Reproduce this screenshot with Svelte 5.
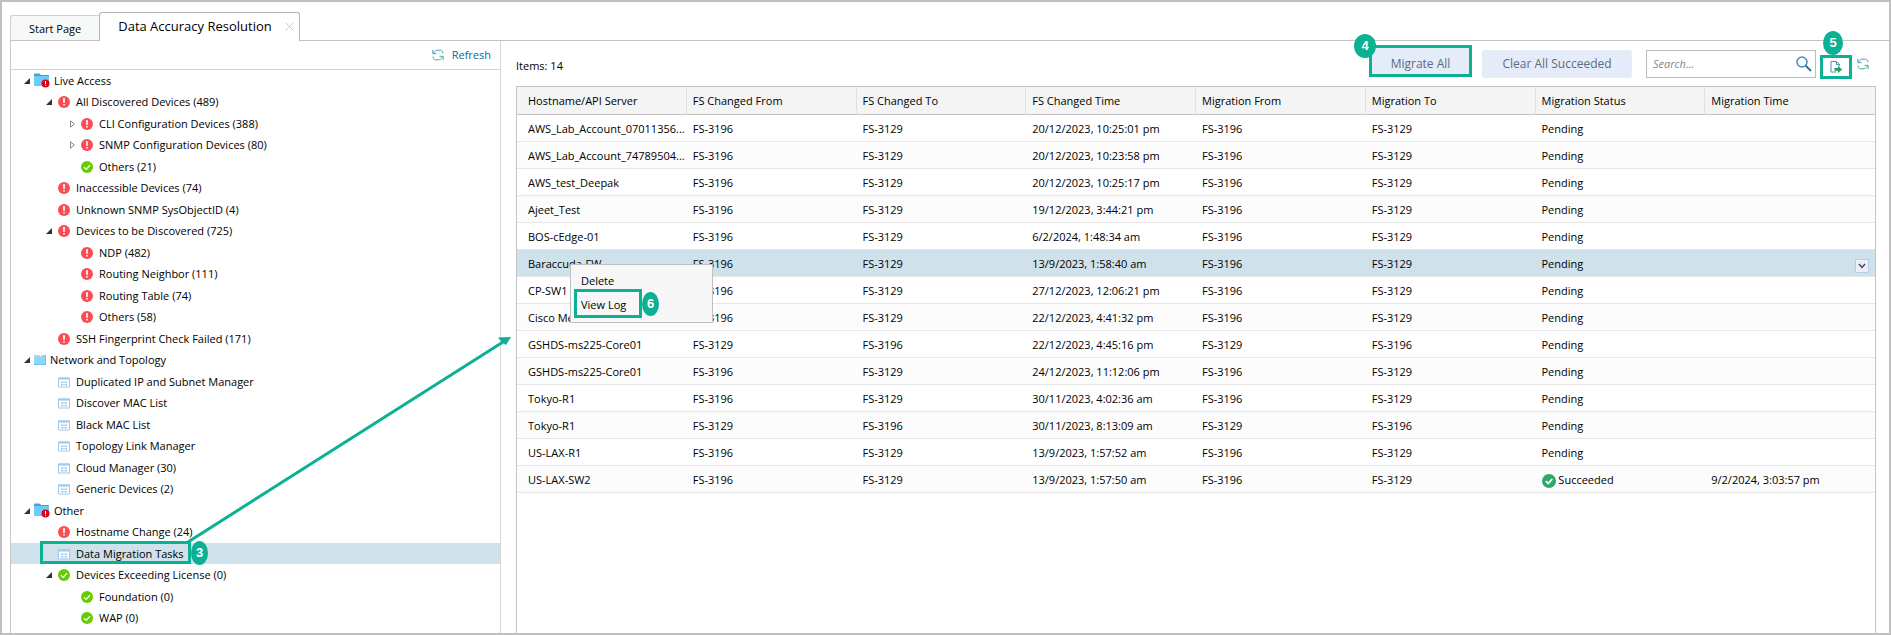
<script lang="ts">
	type Icon = 'alert' | 'ok' | 'page' | 'folder' | 'folder-alert';
	type Toggle = 'open' | 'closed';
	type TreeNode = { label: string; level: number; icon: Icon; toggle?: Toggle };

	const nodes: TreeNode[] = [
		{ label: 'Live Access', level: 0, icon: 'folder-alert', toggle: 'open' },
		{ label: 'All Discovered Devices (489)', level: 1, icon: 'alert', toggle: 'open' },
		{ label: 'CLI Configuration Devices (388)', level: 2, icon: 'alert', toggle: 'closed' },
		{ label: 'SNMP Configuration Devices (80)', level: 2, icon: 'alert', toggle: 'closed' },
		{ label: 'Others (21)', level: 2, icon: 'ok' },
		{ label: 'Inaccessible Devices (74)', level: 1, icon: 'alert' },
		{ label: 'Unknown SNMP SysObjectID (4)', level: 1, icon: 'alert' },
		{ label: 'Devices to be Discovered (725)', level: 1, icon: 'alert', toggle: 'open' },
		{ label: 'NDP (482)', level: 2, icon: 'alert' },
		{ label: 'Routing Neighbor (111)', level: 2, icon: 'alert' },
		{ label: 'Routing Table (74)', level: 2, icon: 'alert' },
		{ label: 'Others (58)', level: 2, icon: 'alert' },
		{ label: 'SSH Fingerprint Check Failed (171)', level: 1, icon: 'alert' },
		{ label: 'Network and Topology', level: 0, icon: 'folder', toggle: 'open' },
		{ label: 'Duplicated IP and Subnet Manager', level: 1, icon: 'page' },
		{ label: 'Discover MAC List', level: 1, icon: 'page' },
		{ label: 'Black MAC List', level: 1, icon: 'page' },
		{ label: 'Topology Link Manager', level: 1, icon: 'page' },
		{ label: 'Cloud Manager (30)', level: 1, icon: 'page' },
		{ label: 'Generic Devices (2)', level: 1, icon: 'page' },
		{ label: 'Other', level: 0, icon: 'folder-alert', toggle: 'open' },
		{ label: 'Hostname Change (24)', level: 1, icon: 'alert' },
		{ label: 'Data Migration Tasks', level: 1, icon: 'page' },
		{ label: 'Devices Exceeding License (0)', level: 1, icon: 'ok', toggle: 'open' },
		{ label: 'Foundation (0)', level: 2, icon: 'ok' },
		{ label: 'WAP (0)', level: 2, icon: 'ok' }
	];

	const columns = [
		'Hostname/API Server',
		'FS Changed From',
		'FS Changed To',
		'FS Changed Time',
		'Migration From',
		'Migration To',
		'Migration Status',
		'Migration Time'
	];

	const A = 'FS-3196';
	const B = 'FS-3129';

	const rows = [
		['AWS_Lab_Account_07011356...', A, B, '20/12/2023, 10:25:01 pm', A, B, 'Pending', ''],
		['AWS_Lab_Account_74789504...', A, B, '20/12/2023, 10:23:58 pm', A, B, 'Pending', ''],
		['AWS_test_Deepak', A, B, '20/12/2023, 10:25:17 pm', A, B, 'Pending', ''],
		['Ajeet_Test', A, B, '19/12/2023, 3:44:21 pm', A, B, 'Pending', ''],
		['BOS-cEdge-01', A, B, '6/2/2024, 1:48:34 am', A, B, 'Pending', ''],
		['Baraccuda-FW', A, B, '13/9/2023, 1:58:40 am', A, B, 'Pending', ''],
		['CP-SW1', A, B, '27/12/2023, 12:06:21 pm', A, B, 'Pending', ''],
		['Cisco Meraki', A, B, '22/12/2023, 4:41:32 pm', A, B, 'Pending', ''],
		['GSHDS-ms225-Core01', B, A, '22/12/2023, 4:45:16 pm', B, A, 'Pending', ''],
		['GSHDS-ms225-Core01', A, B, '24/12/2023, 11:12:06 pm', A, B, 'Pending', ''],
		['Tokyo-R1', A, B, '30/11/2023, 4:02:36 am', A, B, 'Pending', ''],
		['Tokyo-R1', B, A, '30/11/2023, 8:13:09 am', B, A, 'Pending', ''],
		['US-LAX-R1', A, B, '13/9/2023, 1:57:52 am', A, B, 'Pending', ''],
		['US-LAX-SW2', A, B, '13/9/2023, 1:57:50 am', A, B, 'Succeeded', '9/2/2024, 3:03:57 pm']
	];

	let selectedNode = $state(22);
	let selectedRow = $state(5);
	let search = $state('');
</script>

{#snippet refreshIcon()}
	<svg class="icon" viewBox="0 0 12 12" aria-hidden="true">
		<path d="M.8 1v3.700h3.700M1.500 4C2.500 2 4.200 1.200 6 1.200h2.500c1.500 0 2.500 1.300 2.500 3.300" fill="none" stroke="#4a9cc0" />
		<path d="M11.200 11V7.300H7.500M10.500 8C9.500 10 7.800 10.800 6 10.800H3.500C2 10.800 1 9.500 1 7.500" fill="none" stroke="#3cb587" />
	</svg>
{/snippet}

{#snippet nodeIcon(icon: Icon)}
	{#if icon === 'alert'}
		<svg class="icon" viewBox="0 0 12 12" aria-hidden="true">
			<circle cx="6" cy="6" r="6" fill="#fb4b53" />
			<path d="M5 2.300h2L6.700 7H5.300zM5.200 8h1.600v1.600H5.200z" fill="#fff" />
		</svg>
	{:else if icon === 'ok'}
		<svg class="icon" viewBox="0 0 12 12" aria-hidden="true">
			<circle cx="6" cy="6" r="6" fill="#6c0" />
			<path d="M3 6.200l2.200 2.200L9 4.200" fill="none" stroke="#fff" stroke-width="1.300" />
		</svg>
	{:else if icon === 'page'}
		<svg class="icon" viewBox="0 0 12 12" aria-hidden="true">
			<path d="M.5 2h11v9H.5z" fill="#fff" stroke="#9dcbf0" />
			<path d="M0 1.500h12v2H0z" fill="#9dcbf0" />
			<path d="M3 5.500h2.500v1.500H3zM6.500 5.500H9v1.500H6.500zM3 8h2.500v1.500H3zM6.500 8H9v1.500H6.500z" fill="#9dcbf0" />
		</svg>
	{:else if icon === 'folder'}
		<svg class="icon" viewBox="0 0 12 12" aria-hidden="true">
			<path d="M0 1h6v10H0z" fill="#c3d3dc" />
			<path d="M0 3h6l2-2h4v10H0z" fill="#8ed8fb" />
			<path d="M11 1h1v10H0v-1h11z" fill="#6fc3ee" />
		</svg>
	{:else}
		<svg class="folder" viewBox="0 0 16 15" aria-hidden="true">
			<path d="M0 1.500Q0 .5 1 .5h4.500L7 2h7q1 0 1 1v3H0z" fill="#4d9fc9" />
			<path d="M0 3h14q1 0 1 1v8q0 1-1 1H1q-1 0-1-1z" fill="#6ccbfa" />
			<circle cx="11.500" cy="10.500" r="4" fill="#d9041a" />
			<path d="M11 8h1v3h-1zM11 11.800h1v1h-1z" fill="#fff" />
		</svg>
	{/if}
{/snippet}

<div class="frame">
	<nav class="tabs">
		<a class="tab" href="#start">Start Page</a>
		<div class="tab active">
			<a href="#resolution">Data Accuracy Resolution</a>
			<button class="close" aria-label="Close tab">
				<svg viewBox="0 0 9 9" aria-hidden="true"><path d="M.5.5l8 8M8.500.5l-8 8" stroke="#ccc" /></svg>
			</button>
		</div>
	</nav>

	<div class="body">
		<aside class="sidebar">
			<div class="sidebar-head">
				<button class="refresh">{@render refreshIcon()} Refresh</button>
			</div>
			<ul class="tree">
				{#each nodes as node, i}
					<li class="node level-{node.level}" class:selected={i === selectedNode}>
						<button class="node-button" onclick={() => (selectedNode = i)}>
							<span class="toggle">
								{#if node.toggle === 'open'}
									<svg viewBox="0 0 6 6" aria-hidden="true"><path d="M6 0v6H0z" fill="#333" /></svg>
								{:else if node.toggle === 'closed'}
									<svg class="closed" viewBox="0 0 5 8" aria-hidden="true">
										<path d="M.5.8L4.300 4 .5 7.200z" fill="#fff" stroke="#888" />
									</svg>
								{/if}
							</span>
							{@render nodeIcon(node.icon)}
							<span>{node.label}</span>
						</button>
						{#if i === 22}
							<span class="outline"></span>
							<span class="step">3</span>
						{/if}
					</li>
				{/each}
			</ul>
			<svg class="arrow" viewBox="0 0 324 206" aria-hidden="true">
				<path d="M1 205L316 5" stroke="#0cb092" stroke-width="3" />
				<path d="M324 0l-5 8-4-2.500-4-5z" fill="#0cb092" />
			</svg>
		</aside>

		<main class="content">
			<div class="toolbar">
				<span class="count">Items: 14</span>
				<div class="marked migrate">
					<button class="action">Migrate All</button>
					<span class="step">4</span>
				</div>
				<button class="action clear">Clear All Succeeded</button>
				<label class="search">
					<input type="text" placeholder="Search..." aria-label="Search" bind:value={search} />
					<svg viewBox="0 0 16 16" aria-hidden="true">
						<circle cx="6" cy="6" r="5" fill="none" stroke="#3f8fc4" stroke-width="1.500" />
						<path d="M9.800 9.800L15 15" stroke="#2b78b0" stroke-width="2" />
					</svg>
				</label>
				<div class="marked export">
					<button aria-label="Export">
						<svg viewBox="0 0 12 12" aria-hidden="true">
							<path d="M6 11H1V.5h5.500L9.500 3.500V5M6.500.5v3h3" fill="none" stroke="#4a8fc4" />
							<path d="M4.500 7H8V4.800l4 3.600-4 3.600V9.800H4.500z" fill="#17a05e" />
						</svg>
					</button>
					<span class="step">5</span>
				</div>
				<button class="reload" aria-label="Reload">{@render refreshIcon()}</button>
			</div>

			<div class="grid">
				<table>
					<thead>
						<tr>
							{#each columns as column}
								<th>{column}</th>
							{/each}
						</tr>
					</thead>
					<tbody>
						{#each rows as row, i}
							<tr class:selected={i === selectedRow} onclick={() => (selectedRow = i)}>
								{#each row as cell, c}
									<td>
										{#if cell === 'Succeeded'}
											<svg class="done" viewBox="0 0 14 14" aria-hidden="true">
												<circle cx="7" cy="7" r="7" fill="#2fa968" />
												<path d="M3.800 7.200l2.300 2.300 4.200-4.500" fill="none" stroke="#fff" stroke-width="1.800" />
											</svg>
										{/if}
										{cell}
										{#if i === selectedRow && c === 7}
											<button class="row-menu" aria-label="Row actions">
												<svg viewBox="0 0 8 6" aria-hidden="true">
													<path d="M1 1l3 3.500L7 1" fill="none" stroke="#444" stroke-width="1.400" />
												</svg>
											</button>
										{/if}
									</td>
								{/each}
							</tr>
						{/each}
					</tbody>
				</table>

				<div class="menu">
					<button>Delete</button>
					<div class="marked">
						<button>View Log</button>
						<span class="step">6</span>
					</div>
				</div>
			</div>
		</main>
	</div>
</div>

<style>
	:global(body) {
		margin: 0;
		background: #fff;
	}

	.frame {
		box-sizing: border-box;
		min-height: 100vh;
		padding: 10px 0 0 8px;
		border: 2px solid #c0c0c0;
		display: flex;
		flex-direction: column;
		font: 11px/20px 'Open Sans', sans-serif;
		color: #000;
	}

	button,
	input {
		font: inherit;
		color: inherit;
		margin: 0;
		padding: 0;
		border: 0;
		background: none;
	}

	button {
		cursor: pointer;
	}

	svg {
		display: block;
		flex: none;
	}

	.icon {
		width: 12px;
		height: 12px;
	}

	.tabs {
		display: flex;
		align-items: flex-end;
		border-bottom: 1px solid #c3c3c3;
	}

	.tabs a {
		color: #000;
		text-decoration: none;
	}

	.tab {
		box-sizing: border-box;
		height: 25px;
		padding: 3px 18px;
		border: 1px solid #d0d0d0;
		border-bottom: 0;
		border-right: 0;
		border-radius: 3px 0 0 0;
		background: #f7f9f9;
	}

	.tab.active {
		display: flex;
		align-items: center;
		gap: 13px;
		height: 29px;
		margin-bottom: -1px;
		padding: 0 5px 2px 18px;
		border: 1px solid #b0b4b8;
		border-bottom: 0;
		border-radius: 3px 3px 0 0;
		background: #fff;
		font-size: 13px;
	}

	.close svg {
		width: 9px;
		height: 9px;
	}

	.body {
		flex: 1;
		display: flex;
	}

	.sidebar {
		position: relative;
		flex: none;
		width: 489px;
		border-left: 1px solid #c8c8c8;
		border-right: 1px solid #d8d8d8;
	}

	.sidebar-head {
		display: flex;
		justify-content: flex-end;
		padding: 4px 9px;
		border-bottom: 1px solid #d4d4d4;
	}

	.refresh {
		display: flex;
		align-items: center;
		gap: 8px;
		color: #10699b;
	}

	.tree {
		display: grid;
		grid-auto-rows: 21px 22px;
		margin: 0;
		padding: 0 0 4px;
		list-style: none;
	}

	.node {
		position: relative;
	}

	.node-button {
		display: flex;
		align-items: center;
		gap: 4px;
		width: 100%;
		height: 100%;
		padding-left: 13px;
		white-space: nowrap;
	}

	.level-1 .node-button {
		gap: 6px;
		padding-left: 35px;
	}

	.level-2 .node-button {
		gap: 6px;
		padding-left: 58px;
	}

	.folder {
		width: 16px;
		height: 15px;
	}

	.toggle {
		display: flex;
		justify-content: flex-end;
		width: 6px;
	}

	.toggle svg {
		width: 6px;
		height: 6px;
	}

	.toggle .closed {
		width: 5px;
		height: 8px;
	}

	.selected {
		background: #cfe1ea;
	}

	.step {
		position: absolute;
		z-index: 2;
		width: 17px;
		height: 24px;
		border-radius: 50%;
		background: #0cb092;
		color: #fff;
		font: bold 13px/24px 'Liberation Sans', sans-serif;
		text-align: center;
	}

	.outline {
		position: absolute;
		left: 29px;
		top: -2px;
		box-sizing: border-box;
		width: 151px;
		height: 23px;
		border: 3px solid #0cb092;
	}

	.node .step {
		left: 180px;
		top: -2px;
	}

	.arrow {
		position: absolute;
		left: 176px;
		top: 296px;
		width: 324px;
		height: 206px;
		z-index: 1;
	}

	.content {
		flex: 1;
		min-width: 0;
		padding: 4px 13px 0 15px;
	}

	.toolbar {
		display: flex;
		align-items: center;
		box-sizing: border-box;
		height: 41px;
		padding-bottom: 4px;
	}

	.count {
		flex: 1;
		padding-top: 4px;
	}

	.marked {
		position: relative;
		box-sizing: border-box;
		border: 3px solid #0cb092;
	}

	.action {
		height: 28px;
		border-radius: 3px;
		background: #e5ecf9;
		color: #5a6b80;
		font-size: 12px;
	}

	.migrate {
		align-self: flex-start;
		width: 103px;
		height: 32px;
	}

	.migrate .action {
		width: 100%;
		height: 100%;
		padding-top: 5px;
		border-radius: 0;
	}

	.migrate .step {
		left: -18px;
		top: -14px;
		width: 22px;
	}

	.clear {
		width: 150px;
		margin: 0 14px 0 10px;
	}

	.search {
		display: flex;
		align-items: center;
		box-sizing: border-box;
		width: 170px;
		height: 28px;
		padding: 0 3px 0 6px;
		border: 1px solid #bdbdbd;
	}

	.search input {
		flex: 1;
		min-width: 0;
		outline: none;
	}

	.search input::placeholder {
		color: #888;
		font-style: italic;
	}

	.search svg {
		width: 16px;
		height: 16px;
	}

	.export {
		width: 32px;
		height: 24px;
		margin: 6px 5px 0 4px;
	}

	.export button {
		display: flex;
		align-items: center;
		justify-content: center;
		width: 100%;
		height: 100%;
	}

	.export button svg {
		width: 12px;
		height: 12px;
	}

	.export .step {
		left: 0;
		top: -27px;
		width: 20px;
	}

	.reload {
		margin-right: 7px;
	}

	.grid {
		position: relative;
		border: 1px solid #c3c3c3;
		border-bottom: 0;
		min-height: 547px;
		box-sizing: border-box;
	}

	table {
		width: 100%;
		table-layout: fixed;
		border-collapse: separate;
		border-spacing: 0;
	}

	th,
	td {
		box-sizing: border-box;
		height: 27px;
		padding: 2px 0 0 6px;
		border-bottom: 1px solid #e6e6e6;
		font-weight: normal;
		text-align: left;
		white-space: nowrap;
		overflow: hidden;
		text-overflow: ellipsis;
	}

	th:first-child,
	td:first-child {
		padding-left: 11px;
	}

	th {
		height: 28px;
		padding-top: 0;
		border-right: 1px solid #e0e0e0;
		border-bottom-color: #c3c3c3;
		background: #f4f4f4;
	}

	th:last-child {
		border-right: 0;
	}

	tbody tr:nth-child(even) {
		background: #fcfcfc;
	}

	tbody tr.selected {
		background: #cfe1ea;
	}

	.done {
		display: inline-block;
		width: 14px;
		height: 14px;
		vertical-align: -4px;
	}

	.row-menu {
		float: right;
		display: flex;
		align-items: center;
		justify-content: center;
		width: 14px;
		height: 14px;
		margin: 3px 6px 0 0;
		border: 1px solid #b5cfe8;
		background: #e9f0fa;
	}

	.row-menu svg {
		width: 8px;
		height: 6px;
	}

	.menu {
		position: absolute;
		left: 53px;
		top: 177px;
		box-sizing: border-box;
		width: 143px;
		padding: 4px 3px;
		border: 1px solid #c0c0c0;
		background: #f7f7f7;
		line-height: 17px;
	}

	.menu button {
		display: block;
		padding: 3px 7px 0;
	}

	.menu .marked {
		width: 68px;
	}

	.menu .marked button {
		padding: 4px 4px 2px;
	}

	.menu .step {
		left: 65px;
		top: 0;
	}
</style>
